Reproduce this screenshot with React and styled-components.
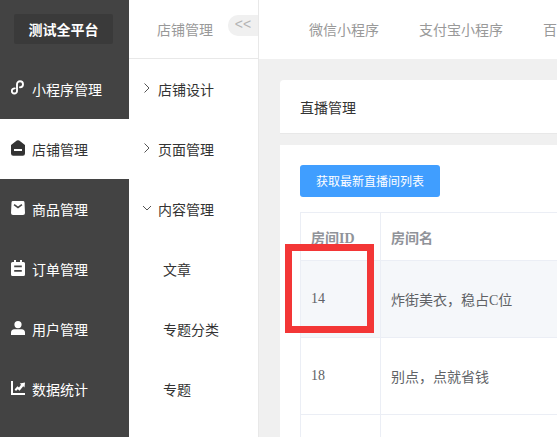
import { createGlobalStyle } from "styled-components";
import styled from "styled-components";

const GlobalStyle = createGlobalStyle`
    html, body {
        margin: 0;
        padding: 0;
        height: 100%;
        overflow: hidden;
        background: #f0f0f0;
    }
    * {
        box-sizing: border-box;
    }
`;

const sans = `"Noto Sans CJK SC", "Liberation Sans", sans-serif`;
const serif = `"Liberation Serif", "Noto Sans CJK SC", serif`;

const Page = styled.div`
    position: relative;
    display: flex;
    width: 557px;
    height: 437px;
    overflow: hidden;
    font-family: ${sans};
    font-size: 14px;
`;

const Sidebar = styled.nav`
    flex: 0 0 129px;
    background: #434343;
    color: #fff;
`;

const Brand = styled.div`
    height: 59px;
    padding: 14px 14px 15px;
`;

const BrandBox = styled.div`
    width: 99px;
    height: 30px;
    background: #3a3a3a;
    border-radius: 2px;
    font-weight: 700;
    font-size: 14px;
    line-height: 30px;
    text-align: center;
`;

const NavItem = styled.div`
    display: flex;
    align-items: center;
    gap: 7px;
    height: 60px;
    padding-left: 11px;
    background: ${(p) => (p.$active ? "#fff" : "transparent")};
    color: ${(p) => (p.$active ? "#333" : "#fff")};
`;

const NavIcon = styled.svg`
    width: 14px;
    height: 16px;
    flex: none;
    fill: currentColor;
    margin-top: -2px;
`;

const SubNav = styled.aside`
    flex: 0 0 130px;
    background: #fff;
    border-right: 1px solid #e8e8e8;
`;

const SubHead = styled.div`
    position: relative;
    height: 59px;
    padding: 0 0 0 28px;
    border-bottom: 1px solid #e8e8e8;
    color: #999;
    line-height: 58px;
`;

const Collapse = styled.div`
    position: absolute;
    top: 15px;
    right: 0;
    width: 30px;
    height: 21px;
    background: #f0f0f0;
    border-radius: 10px 0 0 10px;
    color: #b4b4b4;
    font-family: "Liberation Sans", sans-serif;
    font-size: 14px;
    line-height: 19px;
    text-align: center;
`;

const SubGroup = styled.div`
    display: flex;
    align-items: center;
    gap: 7px;
    height: 60px;
    padding-left: 14px;
    color: #333;
`;

const Chevron = styled.svg`
    width: 8px;
    height: 10px;
    flex: none;
    fill: none;
    stroke: #555;
    stroke-width: 1;
    margin-top: -3px;
`;

const SubLink = styled.div`
    height: 60px;
    padding-left: 34px;
    color: #333;
    line-height: 60px;
`;

const Main = styled.main`
    flex: 1;
    min-width: 0;
    display: flex;
    flex-direction: column;
    background: #f0f0f0;
`;

const Tabs = styled.div`
    flex: none;
    display: flex;
    gap: 40px;
    height: 59px;
    padding-left: 50px;
    background: #fff;
    color: #999;
    line-height: 58px;
    white-space: nowrap;
    overflow: hidden;
`;

const Content = styled.div`
    padding: 21px 0 0 21px;
    width: 318px;
`;

const TitleCard = styled.div`
    height: 54px;
    padding-left: 20px;
    background: #fff;
    border-radius: 4px 0 0 0;
    border-bottom: 1px solid #e8e8e8;
    color: #333;
    font-size: 14px;
    line-height: 54px;
`;

const BodyCard = styled.div`
    width: 500px;
    height: 300px;
    margin-top: 11px;
    padding: 20px 0 0 20px;
    background: #fff;
`;

const PrimaryButton = styled.button`
    display: block;
    width: 140px;
    height: 32px;
    padding: 0;
    border: 0;
    border-radius: 3px;
    background: #409eff;
    color: #fff;
    font-family: ${sans};
    font-size: 12px;
    line-height: 32px;
`;

const Table = styled.div`
    width: 480px;
    margin-top: 15px;
    border-top: 1px solid #ebeef5;
    border-left: 1px solid #ebeef5;
    font-family: ${serif};
    font-size: 14px;
`;

const Row = styled.div`
    display: grid;
    grid-template-columns: 80px 1fr;
    height: ${(p) => p.$height}px;
    background: ${(p) => (p.$hover ? "#f5f7fa" : "#fff")};
    border-bottom: 1px solid #ebeef5;
    color: ${(p) => (p.$head ? "#909399" : "#606266")};
    font-weight: ${(p) => (p.$head ? 700 : 400)};
`;

const Cell = styled.div`
    display: flex;
    align-items: center;
    padding-left: 10px;
    border-right: 1px solid #ebeef5;

    &:last-child {
        border-right: 0;
    }
`;

const Highlight = styled.div`
    position: absolute;
    left: 285px;
    top: 244px;
    width: 89px;
    height: 89px;
    border: 7px solid #f33636;
    pointer-events: none;
`;

const navItems = [
    {
        label: "小程序管理",
        icon: (
            <path
                d="M3.8 8.4A2.6 2.6 0 1 0 6 11V4.2a3 3 0 1 1 3 3"
                fill="none"
                stroke="currentColor"
                strokeWidth="1.9"
                strokeLinecap="round"
            />
        ),
    },
    {
        label: "店铺管理",
        active: true,
        icon: (
            <path
                fillRule="evenodd"
                d="M5.8 0.6a2 2 0 0 1 2.4 0L14 5v8.5a2.2 2.2 0 0 1-2.2 2.2H2.2A2.2 2.2 0 0 1 0 13.5V5zM3 9v2h8V9z"
            />
        ),
    },
    {
        label: "商品管理",
        icon: (
            <path
                fillRule="evenodd"
                d="M2 1h10a1.5 1.5 0 0 1 1.5 1.4L14 13a2 2 0 0 1-2 2H2a2 2 0 0 1-2-2L.5 2.4A1.5 1.5 0 0 1 2 1zM3.6 4L2.6 5.2 7 8.6l4.4-3.4-1-1.2L7 6.4z"
            />
        ),
    },
    {
        label: "订单管理",
        icon: (
            <path
                fillRule="evenodd"
                d="M3 0h2v2h4V0h2v2h1.5A1.5 1.5 0 0 1 14 3.5v11a1.5 1.5 0 0 1-1.5 1.5h-11A1.5 1.5 0 0 1 0 14.5v-11A1.5 1.5 0 0 1 1.5 2H3zM3.2 5.5V7.2h7.6V5.5zM3.2 10v1.7h7.6V10z"
            />
        ),
    },
    {
        label: "用户管理",
        icon: (
            <path d="M7 1a3.6 3.6 0 1 1 0 7.2A3.6 3.6 0 0 1 7 1zM3.5 9.2h7A3.5 3.5 0 0 1 14 12.7V15H0v-2.3a3.5 3.5 0 0 1 3.5-3.5z" />
        ),
    },
    {
        label: "数据统计",
        icon: (
            <path d="M0 1h2v12h12v2H0zM3.6 9.4l2.8-3.2 1.6 1.2L10 4.8l-1.2-1.3L14 2.6l-.5 5-1.3-1.3-3.6 4.5L6.8 9.2 5 11z" />
        ),
    },
];

const subGroups = [
    { label: "店铺设计", open: false },
    { label: "页面管理", open: false },
    { label: "内容管理", open: true },
];

const subLinks = ["文章", "专题分类", "专题"];
const tabs = ["微信小程序", "支付宝小程序", "百度小程序"];

const App = () => {
    return (
        <Page>
            <GlobalStyle />
            <Sidebar>
                <Brand>
                    <BrandBox>测试全平台</BrandBox>
                </Brand>
                {navItems.map((item) => (
                    <NavItem key={item.label} $active={item.active}>
                        <NavIcon viewBox="0 0 14 16">{item.icon}</NavIcon>
                        {item.label}
                    </NavItem>
                ))}
            </Sidebar>
            <SubNav>
                <SubHead>
                    店铺管理
                    <Collapse>&lt;&lt;</Collapse>
                </SubHead>
                {subGroups.map((group) => (
                    <SubGroup key={group.label}>
                        <Chevron viewBox="0 0 8 10">
                            {group.open ? (
                                <path d="M0 3l4 4 4-4" />
                            ) : (
                                <path d="M1.5 0.5l4.5 4.5-4.5 4.5" />
                            )}
                        </Chevron>
                        {group.label}
                    </SubGroup>
                ))}
                {subLinks.map((link) => (
                    <SubLink key={link}>{link}</SubLink>
                ))}
            </SubNav>
            <Main>
                <Tabs>
                    {tabs.map((tab) => (
                        <span key={tab}>{tab}</span>
                    ))}
                </Tabs>
                <Content>
                    <TitleCard>直播管理</TitleCard>
                    <BodyCard>
                        <PrimaryButton>获取最新直播间列表</PrimaryButton>
                        <Table>
                            <Row $head $height={48}>
                                <Cell>房间ID</Cell>
                                <Cell>房间名</Cell>
                            </Row>
                            <Row $hover $height={77}>
                                <Cell>14</Cell>
                                <Cell>炸街美衣，稳占C位</Cell>
                            </Row>
                            <Row $height={77}>
                                <Cell>18</Cell>
                                <Cell>别点，点就省钱</Cell>
                            </Row>
                            <Row $height={77}>
                                <Cell />
                                <Cell />
                            </Row>
                        </Table>
                    </BodyCard>
                </Content>
            </Main>
            <Highlight />
        </Page>
    );
};

export default App;
